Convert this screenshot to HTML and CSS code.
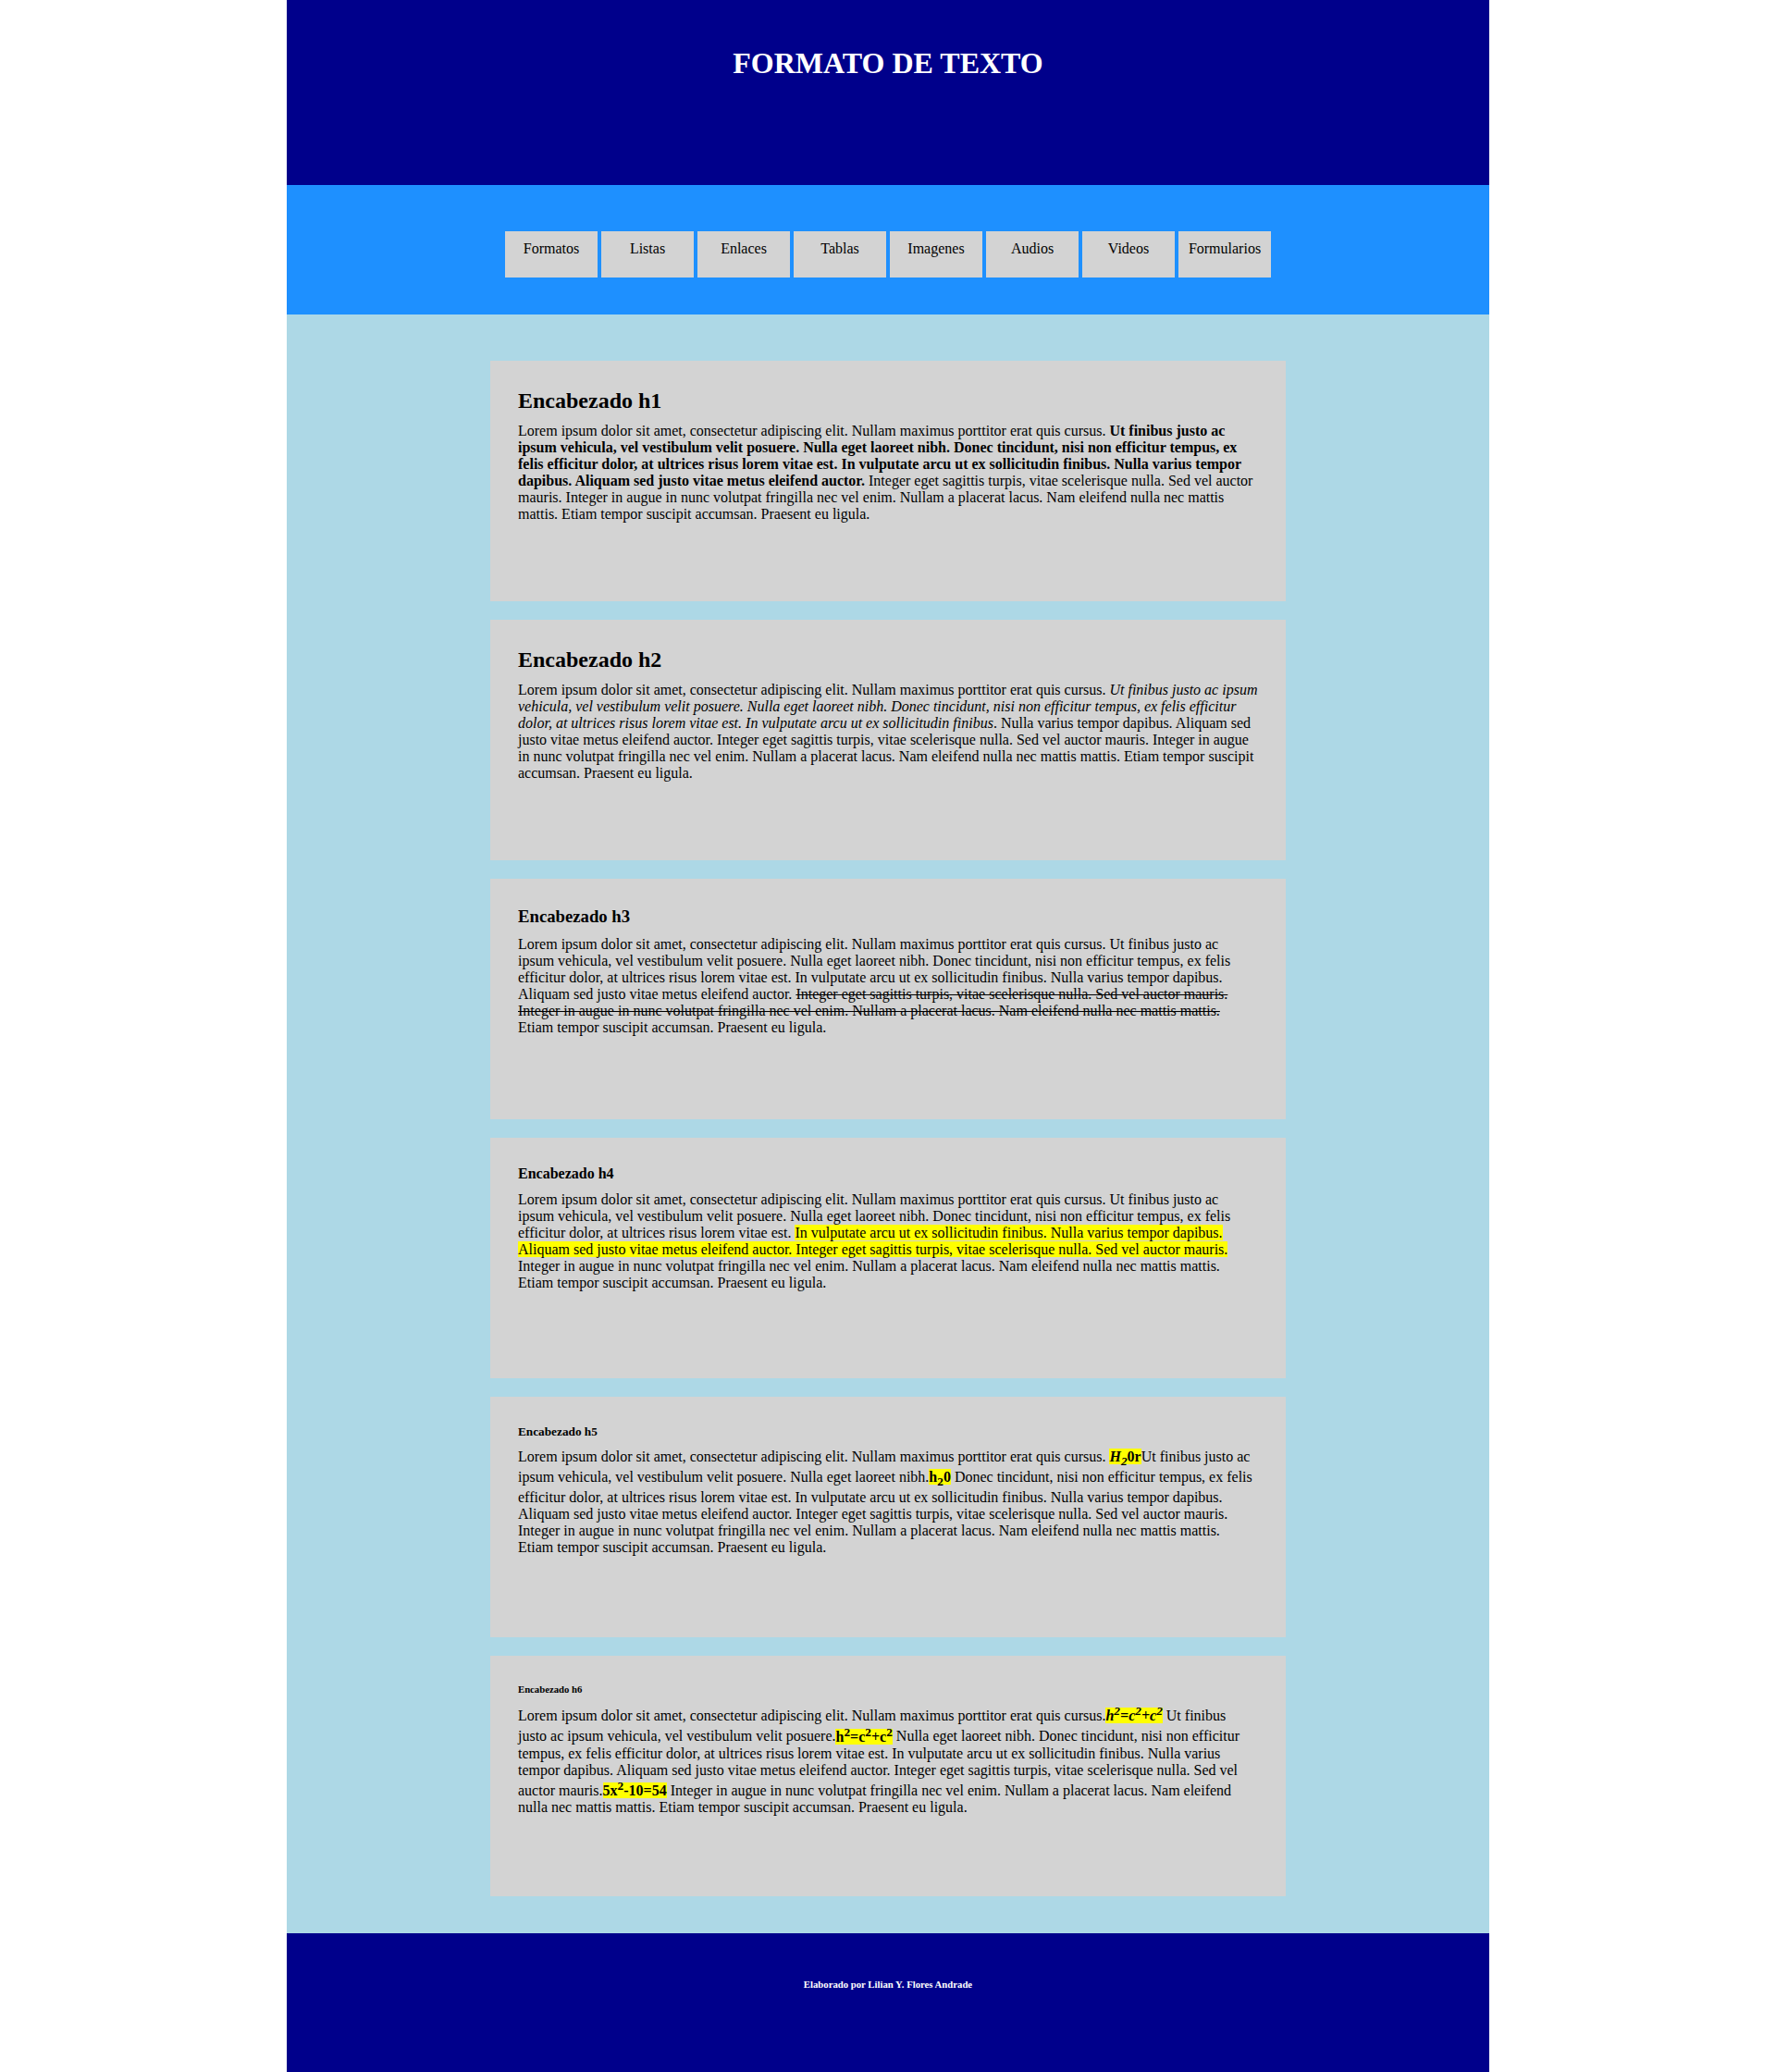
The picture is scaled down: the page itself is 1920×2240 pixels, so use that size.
FILE: index.html
```html
<!DOCTYPE html>
<html lang="es">
<head>
<meta charset="utf-8">
<title>Formato de texto</title>
<link rel="stylesheet" href="styles.css">
</head>
<body>
<div class="page">
  <header class="site-header">
    <h1 class="site-title">FORMATO DE TEXTO</h1>
  </header>
  <nav class="site-nav">
    <a class="nav-btn">Formatos</a>
    <a class="nav-btn">Listas</a>
    <a class="nav-btn">Enlaces</a>
    <a class="nav-btn">Tablas</a>
    <a class="nav-btn">Imagenes</a>
    <a class="nav-btn">Audios</a>
    <a class="nav-btn">Videos</a>
    <a class="nav-btn">Formularios</a>
  </nav>
  <main class="content">
    <section class="card">
      <h1 class="card-h1">Encabezado h1</h1>
      <p class="card-text">Lorem ipsum dolor sit amet, consectetur adipiscing elit. Nullam maximus porttitor erat quis cursus. <b>Ut finibus justo ac ipsum vehicula, vel vestibulum velit posuere. Nulla eget laoreet nibh. Donec tincidunt, nisi non efficitur tempus, ex felis efficitur dolor, at ultrices risus lorem vitae est. In vulputate arcu ut ex sollicitudin finibus. Nulla varius tempor dapibus. Aliquam sed justo vitae metus eleifend auctor.</b> Integer eget sagittis turpis, vitae scelerisque nulla. Sed vel auctor mauris. Integer in augue in nunc volutpat fringilla nec vel enim. Nullam a placerat lacus. Nam eleifend nulla nec mattis mattis. Etiam tempor suscipit accumsan. Praesent eu ligula.</p>
    </section>
    <section class="card">
      <h2 class="card-h2">Encabezado h2</h2>
      <p class="card-text">Lorem ipsum dolor sit amet, consectetur adipiscing elit. Nullam maximus porttitor erat quis cursus. <i>Ut finibus justo ac ipsum vehicula, vel vestibulum velit posuere. Nulla eget laoreet nibh. Donec tincidunt, nisi non efficitur tempus, ex felis efficitur dolor, at ultrices risus lorem vitae est. In vulputate arcu ut ex sollicitudin finibus</i>. Nulla varius tempor dapibus. Aliquam sed justo vitae metus eleifend auctor. Integer eget sagittis turpis, vitae scelerisque nulla. Sed vel auctor mauris. Integer in augue in nunc volutpat fringilla nec vel enim. Nullam a placerat lacus. Nam eleifend nulla nec mattis mattis. Etiam tempor suscipit accumsan. Praesent eu ligula.</p>
    </section>
    <section class="card">
      <h3 class="card-h3">Encabezado h3</h3>
      <p class="card-text">Lorem ipsum dolor sit amet, consectetur adipiscing elit. Nullam maximus porttitor erat quis cursus. Ut finibus justo ac ipsum vehicula, vel vestibulum velit posuere. Nulla eget laoreet nibh. Donec tincidunt, nisi non efficitur tempus, ex felis efficitur dolor, at ultrices risus lorem vitae est. In vulputate arcu ut ex sollicitudin finibus. Nulla varius tempor dapibus. Aliquam sed justo vitae metus eleifend auctor. <s>Integer eget sagittis turpis, vitae scelerisque nulla. Sed vel auctor mauris. Integer in augue in nunc volutpat fringilla nec vel enim. Nullam a placerat lacus. Nam eleifend nulla nec mattis mattis.</s> Etiam tempor suscipit accumsan. Praesent eu ligula.</p>
    </section>
    <section class="card">
      <h4 class="card-h4">Encabezado h4</h4>
      <p class="card-text">Lorem ipsum dolor sit amet, consectetur adipiscing elit. Nullam maximus porttitor erat quis cursus. Ut finibus justo ac ipsum vehicula, vel vestibulum velit posuere. Nulla eget laoreet nibh. Donec tincidunt, nisi non efficitur tempus, ex felis efficitur dolor, at ultrices risus lorem vitae est. <mark class="hl">In vulputate arcu ut ex sollicitudin finibus. Nulla varius tempor dapibus. Aliquam sed justo vitae metus eleifend auctor. Integer eget sagittis turpis, vitae scelerisque nulla. Sed vel auctor mauris.</mark> Integer in augue in nunc volutpat fringilla nec vel enim. Nullam a placerat lacus. Nam eleifend nulla nec mattis mattis. Etiam tempor suscipit accumsan. Praesent eu ligula.</p>
    </section>
    <section class="card">
      <h5 class="card-h5">Encabezado h5</h5>
      <p class="card-text">Lorem ipsum dolor sit amet, consectetur adipiscing elit. Nullam maximus porttitor erat quis cursus. <mark class="hl"><b><i>H<sub>2</sub></i>0r</b></mark>Ut finibus justo ac ipsum vehicula, vel vestibulum velit posuere. Nulla eget laoreet nibh.<mark class="hl"><b>h<sub>2</sub>0</b></mark> Donec tincidunt, nisi non efficitur tempus, ex felis efficitur dolor, at ultrices risus lorem vitae est. In vulputate arcu ut ex sollicitudin finibus. Nulla varius tempor dapibus. Aliquam sed justo vitae metus eleifend auctor. Integer eget sagittis turpis, vitae scelerisque nulla. Sed vel auctor mauris. Integer in augue in nunc volutpat fringilla nec vel enim. Nullam a placerat lacus. Nam eleifend nulla nec mattis mattis. Etiam tempor suscipit accumsan. Praesent eu ligula.</p>
    </section>
    <section class="card">
      <h6 class="card-h6">Encabezado h6</h6>
      <p class="card-text">Lorem ipsum dolor sit amet, consectetur adipiscing elit. Nullam maximus porttitor erat quis cursus.<mark class="hl"><b><i>h<sup>2</sup>=c<sup>2</sup>+c<sup>2</sup></i></b></mark> Ut finibus justo ac ipsum vehicula, vel vestibulum velit posuere.<mark class="hl"><b>h<sup>2</sup>=c<sup>2</sup>+c<sup>2</sup></b></mark> Nulla eget laoreet nibh. Donec tincidunt, nisi non efficitur tempus, ex felis efficitur dolor, at ultrices risus lorem vitae est. In vulputate arcu ut ex sollicitudin finibus. Nulla varius tempor dapibus. Aliquam sed justo vitae metus eleifend auctor. Integer eget sagittis turpis, vitae scelerisque nulla. Sed vel auctor mauris.<mark class="hl"><b>5x<sup>2</sup>-10=54</b></mark> Integer in augue in nunc volutpat fringilla nec vel enim. Nullam a placerat lacus. Nam eleifend nulla nec mattis mattis. Etiam tempor suscipit accumsan. Praesent eu ligula.</p>
    </section>
  </main>
  <footer class="site-footer">
    <p class="footer-text">Elaborado por Lilian Y. Flores Andrade</p>
  </footer>
</div>
</body>
</html>
```
FILE: styles.css
```css
html, body {
  margin: 0;
  padding: 0;
  background: #ffffff;
}

body {
  font-family: "Liberation Serif", "Times New Roman", serif;
  font-size: 16px;
  color: #000000;
}

.page {
  width: 1300px;
  margin: 0 auto;
}

.site-header {
  background: #00008b;
  height: 200px;
  box-sizing: border-box;
  padding-top: 50px;
}

.site-title {
  margin: 0;
  text-align: center;
  color: #ffffff;
  font-size: 32px;
  font-weight: bold;
  line-height: normal;
}

.site-nav {
  background: #1e90ff;
  height: 140px;
  box-sizing: border-box;
  padding-top: 50px;
  display: flex;
  justify-content: center;
  align-items: flex-start;
  gap: 4px;
}

.nav-btn {
  display: block;
  width: 100px;
  height: 50px;
  box-sizing: border-box;
  padding-top: 10px;
  background: #d3d3d3;
  color: #000000;
  text-align: center;
  font-size: 16px;
  line-height: normal;
}

.content {
  background: #add8e6;
  padding: 50px 0 40px;
  display: flex;
  flex-direction: column;
  align-items: center;
  gap: 20px;
}

.card {
  width: 860px;
  height: 260px;
  box-sizing: border-box;
  padding: 30px 30px 0;
  background: #d3d3d3;
}

.card-h1, .card-h2, .card-h3, .card-h4, .card-h5, .card-h6 {
  margin: 0 0 10px;
  font-weight: bold;
  line-height: normal;
}

.card-h1, .card-h2 { font-size: 24px; }
.card-h3 { font-size: 18.72px; }
.card-h4 { font-size: 16px; }
.card-h5 { font-size: 13.28px; }
.card-h6 { font-size: 10.72px; }

.card-text {
  margin: 0;
  font-size: 16px;
  line-height: normal;
}

.hl {
  background: #ffff00;
  color: #000000;
}

.site-footer {
  background: #00008b;
  height: 150px;
  box-sizing: border-box;
  padding-top: 49px;
}

.footer-text {
  margin: 0;
  text-align: center;
  color: #ffffff;
  font-size: 10.72px;
  font-weight: bold;
  line-height: normal;
}
```
